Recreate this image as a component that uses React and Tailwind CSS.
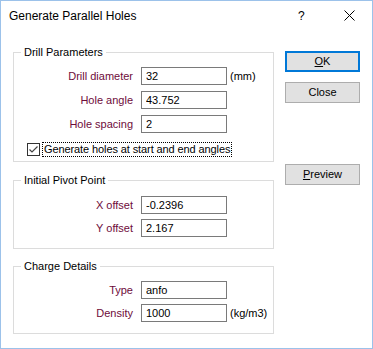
import { useState } from 'react';

const font = { fontFamily: '"Liberation Sans", Arial, sans-serif' };

function Field({ label, value, unit }) {
  return (
    <div className="flex items-center h-[18px]">
      <div className="w-[120px] text-right text-[11px] text-[#6e0b3a] pr-[1px]">{label}</div>
      <input
        defaultValue={value}
        className="ml-[7px] w-[86px] h-[18px] border border-[#7a7a7a] bg-white px-[4px] text-[11px] text-black outline-none"
      />
      {unit && <span className="ml-[3px] text-[11px] text-black">{unit}</span>}
    </div>
  );
}

function Group({ title, className, children }) {
  return (
    <div className={`relative border border-[#dcdcdc] ${className}`}>
      {/* legend sits on the top border */}
      <span className="absolute left-[7px] top-[-8px] bg-white px-[3px] text-[11px] leading-[14px] text-black">
        {title}
      </span>
      {children}
    </div>
  );
}

function Button({ children, primary }) {
  return (
    <button
      className={`w-[75px] h-[21px] bg-[#e1e1e1] text-[11px] text-black flex items-center justify-center ${primary
        ? 'border-2 border-[#0078d7]'
        : 'border border-[#adadad]'
      }`}
    >
      {children}
    </button>
  );
}

export default function App() {
  const [checked, setChecked] = useState(true);

  return (
    <div style={font} className="w-[373px] h-[349px] border border-[#9cc2ea] bg-white flex flex-col overflow-hidden">
      {/* 标题栏 */}
      <div className="h-[29px] flex items-center shrink-0">
        <span className="ml-[8px] text-[12px] text-black">Generate Parallel Holes</span>
        <span className="ml-auto text-[12px] text-black w-[10px]">?</span>
        <svg className="ml-[36px] mr-[17px]" width="11" height="11" viewBox="0 0 11 11">
          <path d="M0.5 0.5 L10.5 10.5 M10.5 0.5 L0.5 10.5" stroke="#000" strokeWidth="1" />
        </svg>
      </div>

      <div className="flex">
        {/* 左侧分组 */}
        <div className="pl-[12px] w-[273px] shrink-0">
          <Group title="Drill Parameters" className="mt-[22px] h-[110px]">
            <div className="pt-[14px] flex flex-col gap-[6px]">
              <Field label="Drill diameter" value="32" unit="(mm)" />
              <Field label="Hole angle" value="43.752" />
              <Field label="Hole spacing" value="2" />
            </div>
            <label className="mt-[8px] ml-[13px] flex items-center h-[16px]" onClick={() => setChecked(!checked)}>
              <span className="w-[13px] h-[13px] border border-[#333] bg-white flex items-center justify-center">
                {checked && (
                  <svg width="11" height="11" viewBox="0 0 11 11">
                    <path d="M1.5 5.5 L4 8 L9.5 2.5" stroke="#444" strokeWidth="1.2" fill="none" />
                  </svg>
                )}
              </span>
              <span className="ml-[2px] px-[1px] border border-dotted border-black text-[11px] leading-[13px] tracking-[-0.1px] text-black">
                Generate holes at start and end angles
              </span>
            </label>
          </Group>

          <Group title="Initial Pivot Point" className="mt-[18px] h-[69px]">
            <div className="pt-[15px] flex flex-col gap-[5px]">
              <Field label="X offset" value="-0.2396" />
              <Field label="Y offset" value="2.167" />
            </div>
          </Group>

          <Group title="Charge Details" className="mt-[17px] h-[68px]">
            <div className="pt-[14px] flex flex-col gap-[5px]">
              <Field label="Type" value="anfo" />
              <Field label="Density" value="1000" unit="(kg/m3)" />
            </div>
          </Group>
        </div>

        {/* 右侧按钮 */}
        <div className="ml-[11px] flex flex-col">
          <div className="mt-[21px]">
            <Button primary><span className="underline">O</span>K</Button>
          </div>
          <div className="mt-[10px]">
            <Button>Close</Button>
          </div>
          <div className="mt-[61px]">
            <Button><span className="underline">P</span>review</Button>
          </div>
        </div>
      </div>
    </div>
  );
}
